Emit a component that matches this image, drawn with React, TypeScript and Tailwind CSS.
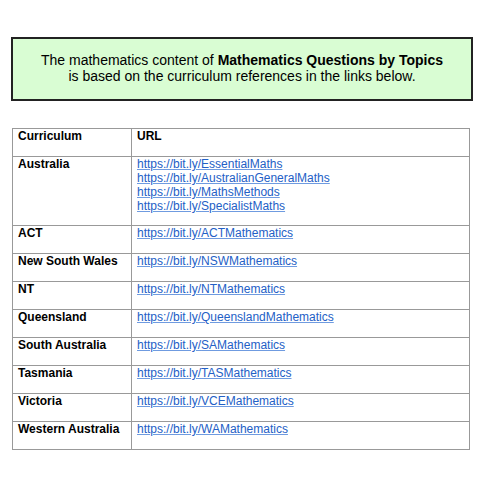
const rows: { name: string; links: string[] }[] = [
  {
    name: "Australia",
    links: [
      "EssentialMaths",
      "AustralianGeneralMaths",
      "MathsMethods",
      "SpecialistMaths",
    ],
  },
  { name: "ACT", links: ["ACTMathematics"] },
  { name: "New South Wales", links: ["NSWMathematics"] },
  { name: "NT", links: ["NTMathematics"] },
  { name: "Queensland", links: ["QueenslandMathematics"] },
  { name: "South Australia", links: ["SAMathematics"] },
  { name: "Tasmania", links: ["TASMathematics"] },
  { name: "Victoria", links: ["VCEMathematics"] },
  { name: "Western Australia", links: ["WAMathematics"] },
];

export default function App() {
  return (
    <div className="w-[500px] h-[500px] bg-white pt-[37px] pl-[11px] font-['Liberation_Sans',Arial,sans-serif] text-black">
      <div className="w-[462px] h-[64px] border-2 border-[#222] bg-[#d9fdd3] flex flex-col items-center justify-center text-[14px] leading-[16px] pb-[2px]">
        <p>
          The mathematics content of <b>Mathematics Questions by Topics</b>
        </p>
        <p>is based on the curriculum references in the links below.</p>
      </div>

      <table className="mt-[27px] ml-px w-[458px] border-collapse text-[12px] leading-[14px]">
        <tbody>
          <tr className="h-[28px]">
            <td className="w-[119px] border border-[#999] align-top pl-[5px] pt-0 pb-0 font-bold">
              Curriculum
            </td>
            <td className="border border-[#999] align-top pl-[5px] pt-0 pb-0 font-bold">
              URL
            </td>
          </tr>
          {rows.map((r) => (
            <tr key={r.name} className={r.links.length > 1 ? "h-[69px]" : "h-[28px]"}>
              <td className="border border-[#999] align-top pl-[5px] p-0 font-bold">
                {r.name}
              </td>
              <td className="border border-[#999] align-top pl-[5px] p-0">
                {r.links.map((l) => (
                  <div key={l} className="h-[14px]">
                    <a
                      href={"https://bit.ly/" + l}
                      className="text-[#2360c6] underline underline-offset-1 decoration-[#6f9be0]"
                    >
                      https://bit.ly/{l}
                    </a>
                  </div>
                ))}
              </td>
            </tr>
          ))}
        </tbody>
      </table>
    </div>
  );
}
